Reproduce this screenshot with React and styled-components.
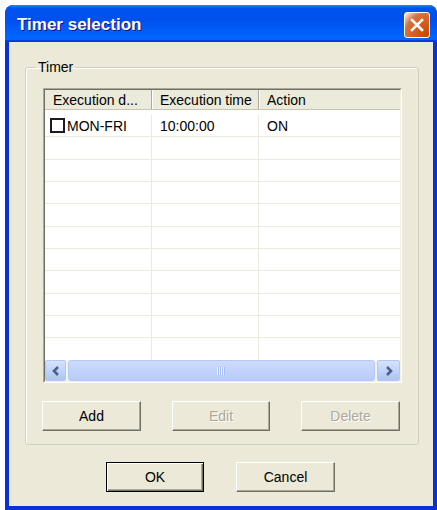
import React from 'react';
import styled, { createGlobalStyle } from 'styled-components';

const Global = createGlobalStyle`
  html, body {
    margin: 0;
    background: #fff;
  }
  body {
    font-family: "Liberation Sans", Arial, sans-serif;
    font-size: 14px;
    color: #000;
  }
`;

const Window = styled.div`
  margin: 5px 0 0 5px;
  width: 432px;
  height: 505px;
  background: #0831d9;
  border-radius: 8px 8px 0 0;
  display: flex;
  flex-direction: column;
  overflow: hidden;
`;

const TitleBar = styled.div`
  height: 37px;
  box-sizing: border-box;
  padding: 3px 7px 0 12px;
  display: flex;
  align-items: center;
  justify-content: space-between;
  background: linear-gradient(180deg, #0997ff, #0053ee 8%, #0050ee 40%, #0066ff 88%, #0066ff 93%, #005bff 95%, #003dd7 96%, #003dd7);
  border-radius: 8px 8px 0 0;
`;

const Title = styled.span`
  color: #fff;
  font-weight: bold;
  font-size: 17px;
  text-shadow: 1px 1px #0f1089;
`;

const CloseButton = styled.button`
  width: 26px;
  height: 26px;
  padding: 0;
  border: 1px solid #fff;
  border-radius: 3px;
  background: radial-gradient(circle at 90% 90%, #cc4600 0%, #dc6527 55%, #cd7546 70%, #ffccb2 90%, #fff 100%);
  display: flex;
  align-items: center;
  justify-content: center;
`;

const Body = styled.div`
  flex: 1;
  margin: 0 4px 4px;
  background: #ece9d8;
  display: flex;
  flex-direction: column;
`;

const Group = styled.fieldset`
  margin: 17px 14px 0 16px;
  padding: 13px 16px 13px 17px;
  border: 1px solid #d0d0bf;
  border-radius: 3px;
  box-shadow: 1px 1px 0 #fff inset;
`;

const Legend = styled.legend`
  margin-left: -7px;
  padding: 0 2px;
  line-height: 16px;
  font-size: 14px;
`;

const ListFrame = styled.div`
  height: 295px;
  box-sizing: border-box;
  border: 1px solid;
  border-color: #aca899 #fff #fff #aca899;
`;

const ListInner = styled.div`
  height: 100%;
  box-sizing: border-box;
  border: 1px solid;
  border-color: #716f64 #f1efe2 #f1efe2 #716f64;
  background: #fff;
  display: flex;
  flex-direction: column;
`;

const Header = styled.div`
  height: 20px;
  display: flex;
  background: #ebeadb;
  border-bottom: 1px solid #c7c5b2;
  box-sizing: border-box;
  flex: none;
`;

const HeaderCell = styled.div`
  width: ${p => p.$w}px;
  flex: ${p => (p.$w ? 'none' : '1')};
  box-sizing: border-box;
  padding: 2px 0 0 8px;
  border-right: ${p => (p.$w ? '1px solid #aca899' : 'none')};
  box-shadow: ${p => (p.$first ? 'none' : 'inset 1px 0 #fff')};
  white-space: nowrap;
  overflow: hidden;
  line-height: 16px;
`;

const Rows = styled.div`
  flex: 1;
  overflow: hidden;
`;

const Row = styled.div`
  height: ${p => (p.$first ? '27.33px' : '22.33px')};
  padding-top: ${p => (p.$first ? '5px' : '0')};
  box-sizing: border-box;
  display: flex;
  border-bottom: 1px solid #ebe9e0;
`;

const Cell = styled.div`
  width: ${p => p.$w}px;
  flex: ${p => (p.$w ? 'none' : '1')};
  box-sizing: border-box;
  padding-left: ${p => (p.$check ? 5 : 8)}px;
  border-right: ${p => (p.$w ? '1px solid #ebe9e0' : 'none')};
  display: flex;
  align-items: center;
  gap: 2px;
  white-space: nowrap;
`;

const Check = styled.span`
  width: 15px;
  height: 15px;
  box-sizing: border-box;
  border: 2px solid #1c1c1c;
  background: #fff;
  flex: none;
`;

const ScrollBar = styled.div`
  height: 21px;
  flex: none;
  display: flex;
  align-items: stretch;
  background: #f4f3ee;
  gap: 2px;
`;

const ScrollArrow = styled.div`
  width: ${p => p.$w}px;
  flex: none;
  box-sizing: border-box;
  border: 1px solid #b4c6f2;
  border-radius: 2px;
  background: linear-gradient(180deg, #d6e2fe, #bdd0fb 60%, #adc3f6);
  display: flex;
  align-items: center;
  justify-content: center;
`;

const Thumb = styled.div`
  flex: 1;
  box-sizing: border-box;
  border: 1px solid #b4c8f6;
  border-radius: 3px;
  background: linear-gradient(180deg, #cddcfd, #c1d3fb 50%, #b8ccf9);
  display: flex;
  align-items: center;
  justify-content: center;
`;

const ButtonRow = styled.div`
  margin-top: 18px;
  margin-left: -1px;
  display: flex;
  gap: 31px;
`;

const FooterRow = styled.div`
  margin-top: 17px;
  display: flex;
  justify-content: center;
  gap: 32px;
  padding-right: 1px;
`;

const Button = styled.button`
  width: ${p => p.$w || 99}px;
  height: 30px;
  box-sizing: border-box;
  padding: 0;
  font-family: "Liberation Sans", Arial, sans-serif;
  font-size: 14px;
  background: #ece9d8;
  color: ${p => (p.disabled ? '#aca899' : '#000')};
  text-shadow: ${p => (p.disabled ? '1px 1px #fff' : 'none')};
  border: 1px solid;
  border-color: ${p => (p.$default ? '#000' : '#fff #716f64 #716f64 #fff')};
  box-shadow: ${p =>
    p.$default
      ? 'inset 1px 1px #fff, inset -1px -1px #716f64, inset -2px -2px #aca899'
      : 'inset -1px -1px #aca899'};
`;

const Chevron = ({ dir }) => (
  <svg width="10" height="12" viewBox="0 0 10 12">
    <polyline
      points={dir === 'left' ? '7,2 3,6 7,10' : '3,2 7,6 3,10'}
      fill="none"
      stroke="#4d6185"
      strokeWidth="2.6"
    />
  </svg>
);

const Grip = () => (
  <svg width="9" height="8" viewBox="0 0 9 8">
    {[0, 2, 4, 6].map(x => (
      <rect key={x} x={x} y="0" width="1" height="8" fill="#eef4fe" />
    ))}
    {[1, 3, 5, 7].map(x => (
      <rect key={x} x={x} y="0" width="1" height="8" fill="#a6bdf0" />
    ))}
  </svg>
);

const columns = [
  { title: 'Execution d...', w: 107 },
  { title: 'Execution time', w: 107 },
  { title: 'Action' },
];

const timers = [{ days: 'MON-FRI', time: '10:00:00', action: 'ON' }];

function App() {
  const empty = Array.from({ length: 11 - timers.length });

  return (
    <>
      <Global />
      <Window>
        <TitleBar>
          <Title>Timer selection</Title>
          <CloseButton aria-label="Close">
            <svg width="14" height="14" viewBox="0 0 14 14">
              <path d="M2 2 L12 12 M12 2 L2 12" stroke="#fff" strokeWidth="2.6" strokeLinecap="square" />
            </svg>
          </CloseButton>
        </TitleBar>
        <Body>
          <Group>
            <Legend>Timer</Legend>
            <ListFrame>
              <ListInner>
                <Header>
                  {columns.map((c, i) => (
                    <HeaderCell key={c.title} $w={c.w} $first={i === 0}>
                      {c.title}
                    </HeaderCell>
                  ))}
                </Header>
                <Rows>
                  {timers.map((t, i) => (
                    <Row key={t.days} $first={i === 0}>
                      <Cell $w={107} $check>
                        <Check />
                        {t.days}
                      </Cell>
                      <Cell $w={107}>{t.time}</Cell>
                      <Cell>{t.action}</Cell>
                    </Row>
                  ))}
                  {empty.map((_, i) => (
                    <Row key={i}>
                      <Cell $w={107} />
                      <Cell $w={107} />
                      <Cell />
                    </Row>
                  ))}
                </Rows>
                <ScrollBar>
                  <ScrollArrow $w={21}>
                    <Chevron dir="left" />
                  </ScrollArrow>
                  <Thumb>
                    <Grip />
                  </Thumb>
                  <ScrollArrow $w={23}>
                    <Chevron dir="right" />
                  </ScrollArrow>
                </ScrollBar>
              </ListInner>
            </ListFrame>
            <ButtonRow>
              <Button>Add</Button>
              <Button $w={98} disabled>Edit</Button>
              <Button disabled>Delete</Button>
            </ButtonRow>
          </Group>
          <FooterRow>
            <Button $w={98} $default>OK</Button>
            <Button>Cancel</Button>
          </FooterRow>
        </Body>
      </Window>
    </>
  );
}

export default App;
